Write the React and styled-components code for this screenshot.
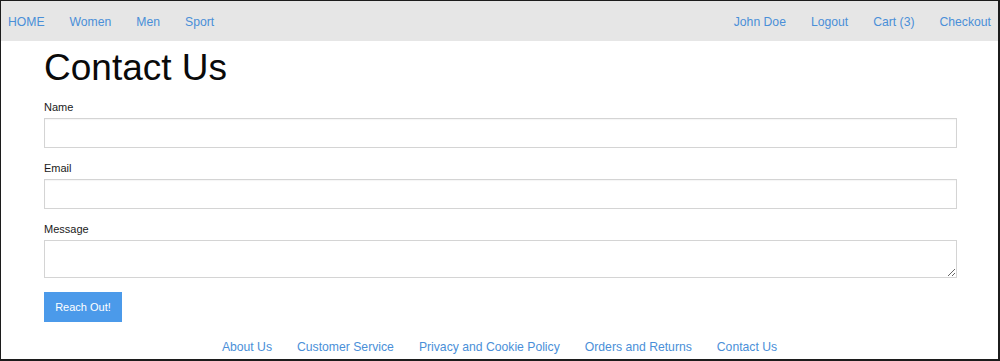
import styled, { createGlobalStyle } from 'styled-components';

const GlobalStyle = createGlobalStyle`
    html, body {
        margin: 0;
        padding: 0;
        background: #fff;
    }
    * {
        box-sizing: border-box;
    }
`;

const Frame = styled.div`
    width: 1000px;
    height: 361px;
    border-style: solid;
    border-color: #1c1c1c;
    border-width: 1px 2px 2px 1px;
    font-family: 'Liberation Sans', Arial, sans-serif;
    color: #111;
    display: flex;
    flex-direction: column;
    overflow: hidden;
`;

const NavBar = styled.nav`
    height: 40px;
    background: #e6e6e6;
    display: flex;
    justify-content: space-between;
    align-items: center;
    padding: 1px 7px 0 7px;
`;

const NavGroup = styled.div`
    display: flex;
    gap: 25px;
`;

const Link = styled.a`
    color: #4a8fd8;
    text-decoration: none;
    font-size: 12.2px;
    line-height: 16px;
`;

const Main = styled.main`
    padding: 0 41px 0 43px;
    flex: 1;
`;

const Title = styled.h1`
    margin: 7px 0 0;
    font-size: 37px;
    font-weight: 400;
    line-height: 40px;
    color: #0a0a0a;
`;

const Field = styled.div`
    margin-top: ${(p) => p.$top}px;
`;

const Label = styled.label`
    display: block;
    font-size: 11px;
    line-height: 13px;
    color: #1a1a1a;
    margin-bottom: 4px;
`;

const Input = styled.input`
    display: block;
    width: 100%;
    height: 30px;
    border: 1px solid #d4d4d4;
    box-shadow: inset 0 1px 1px rgba(0, 0, 0, 0.04);
    background: #fff;
    margin: 0;
`;

const TextArea = styled.textarea`
    display: block;
    width: 100%;
    height: 38px;
    border: 1px solid #d4d4d4;
    background: #fff;
    margin: 0;
    font-family: inherit;
`;

const Button = styled.button`
    margin-top: 14px;
    width: 78px;
    height: 30px;
    border: none;
    background: #4b9aea;
    color: #fff;
    font-family: inherit;
    font-size: 11px;
    padding: 0;
`;

const Footer = styled.footer`
    display: flex;
    justify-content: center;
    gap: 25px;
    padding: 0 0 4px 0;
`;

export default function App() {
    return (
        <>
            <GlobalStyle />
            <Frame>
                <NavBar>
                    <NavGroup>
                        <Link href="#">HOME</Link>
                        <Link href="#">Women</Link>
                        <Link href="#">Men</Link>
                        <Link href="#">Sport</Link>
                    </NavGroup>
                    <NavGroup>
                        <Link href="#">John Doe</Link>
                        <Link href="#">Logout</Link>
                        <Link href="#">Cart (3)</Link>
                        <Link href="#">Checkout</Link>
                    </NavGroup>
                </NavBar>
                <Main>
                    <Title>Contact Us</Title>
                    <Field $top={13}>
                        <Label>Name</Label>
                        <Input type="text" />
                    </Field>
                    <Field $top={14}>
                        <Label>Email</Label>
                        <Input type="text" />
                    </Field>
                    <Field $top={14}>
                        <Label>Message</Label>
                        <TextArea />
                    </Field>
                    <Button>Reach Out!</Button>
                </Main>
                <Footer>
                    <Link href="#">About Us</Link>
                    <Link href="#">Customer Service</Link>
                    <Link href="#">Privacy and Cookie Policy</Link>
                    <Link href="#">Orders and Returns</Link>
                    <Link href="#">Contact Us</Link>
                </Footer>
            </Frame>
        </>
    );
}
